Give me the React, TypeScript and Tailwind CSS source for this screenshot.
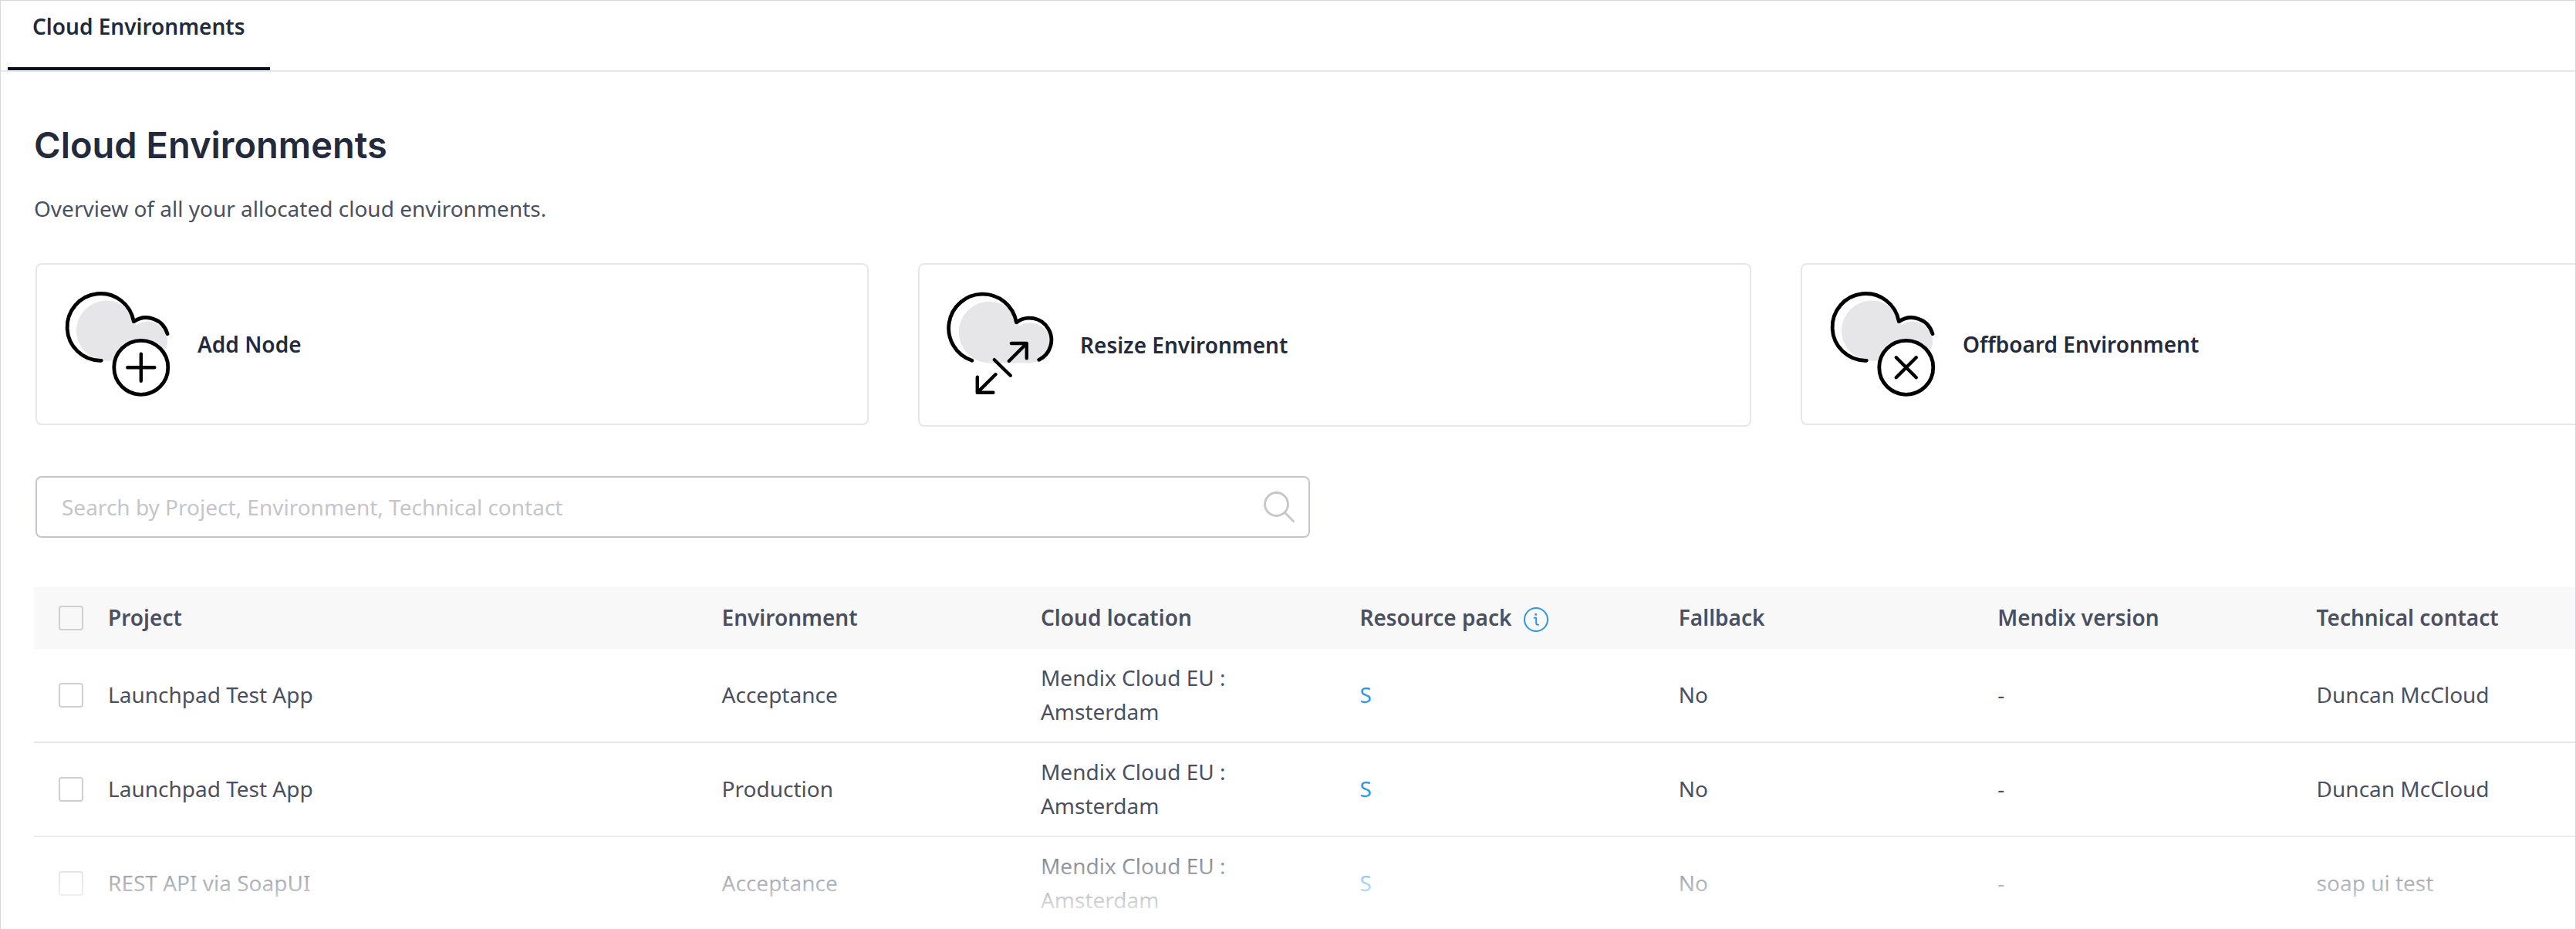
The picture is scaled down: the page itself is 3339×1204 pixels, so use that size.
import React from "react";

const columns = [
  "Environment",
  "Cloud location",
  "Resource pack",
  "Fallback",
  "Mendix version",
  "Technical contact",
];

const rows = [
  { project: "Launchpad Test App", environment: "Acceptance", contact: "Duncan McCloud" },
  { project: "Launchpad Test App", environment: "Production", contact: "Duncan McCloud" },
  { project: "REST API via SoapUI", environment: "Acceptance", contact: "soap ui test" },
];

function CloudBadgeIcon({ kind }: { kind: "add" | "remove" }) {
  return (
    <svg
      className="h-[140px] w-[140px] shrink-0"
      viewBox="0 0 140 140"
      fill="none"
      stroke="#000"
      strokeWidth="4.8"
      strokeLinecap="round"
      strokeLinejoin="round"
      aria-hidden="true"
    >
      <g fill="#e6e6e8" stroke="none">
        <circle cx="56" cy="52.5" r="39" />
        <circle cx="109.7" cy="66" r="25.5" />
        <path d="M56 60h53.7v31.5H56Z" />
      </g>
      <path d="M49.3 91.3h-1.5A43.4 43.4 0 1 1 91.3 40.7A28.5 28.5 0 0 1 135 56.7" />
      <circle cx="100.8" cy="100.3" r="35" fill="#fff" />
      {kind === "add" ? (
        <path d="M100.8 82.8v35M83.3 100.3h35" strokeWidth="4.4" />
      ) : (
        <path d="M87.8 87.3l26 26M113.8 87.3l-26 26" strokeWidth="4.4" />
      )}
    </svg>
  );
}

function CloudResizeIcon() {
  return (
    <svg
      className="h-[140px] w-[140px] shrink-0"
      viewBox="0 0 140 140"
      fill="none"
      stroke="#000"
      strokeWidth="4.8"
      strokeLinecap="round"
      strokeLinejoin="round"
      aria-hidden="true"
    >
      <g fill="#e6e6e8" stroke="none">
        <circle cx="56.5" cy="53.5" r="39.8" />
        <circle cx="109.5" cy="67.3" r="26" />
        <path d="M56.5 60h53v33.3h-53Z" />
      </g>
      <path d="M33.9 90.3A44.2 44.2 0 1 1 91.4 40.7A28.5 28.5 0 1 1 120.7 89.3" />
      <g strokeWidth="4.4">
        <path d="M81.8 91l23-23M84.9 68h19.9v19.3" />
        <path d="M62.8 89.2l21 20.6" />
        <path d="M64.5 108.3l-23.7 23.4M40.8 111.7v20h20.6" />
      </g>
    </svg>
  );
}

function SearchIcon() {
  return (
    <svg
      className="h-10 w-10 shrink-0"
      viewBox="0 0 40 40"
      fill="none"
      stroke="#c5c5cb"
      strokeWidth="2.8"
      strokeLinecap="round"
      aria-hidden="true"
    >
      <circle cx="16.5" cy="16.5" r="15" />
      <path d="M27.3 27.3L38.5 38.5" />
    </svg>
  );
}

function InfoIcon() {
  return (
    <svg
      className="mt-1.5 h-8 w-8 shrink-0"
      viewBox="0 0 32 32"
      fill="none"
      stroke="#2f97e8"
      strokeWidth="2"
      strokeLinecap="round"
      strokeLinejoin="round"
      aria-hidden="true"
    >
      <circle cx="16" cy="16" r="15" />
      <path d="M13.7 13.8h2.5v7.2q0 1.8 2.8 1.8" />
      <circle cx="15.7" cy="9.3" r="1.5" fill="#2f97e8" stroke="none" />
    </svg>
  );
}

function Checkbox({ label }: { label: string }) {
  return (
    <input
      type="checkbox"
      aria-label={label}
      className="ml-8 block h-8 w-8 appearance-none rounded border-2 border-[#ceced3] bg-transparent checked:bg-[#2f97e8]"
    />
  );
}

function ActionCard({ label, icon, tall }: { label: string; icon: React.ReactNode; tall?: boolean }) {
  return (
    <button
      type="button"
      className={`flex items-center gap-[34px] rounded-lg border-2 border-[#e7e7e9] pl-[34px] text-left font-semibold text-[#232a3b] ${tall ? "h-[212px]" : "h-[210px]"}`}
    >
      {icon}
      {label}
    </button>
  );
}

const cell = "border-b-2 border-[#e7e7e9] px-0 pt-0 pb-0.5";

export default function App() {
  return (
    <div className="relative max-h-screen overflow-hidden border border-b-0 border-[#d7d7d9] bg-white font-['Noto_Sans',sans-serif] text-[28px] leading-[44px] text-[#4a5060]">
      <nav className="flex border-b-2 border-[#e7e7e9] pl-[9px]">
        <button
          type="button"
          className="border-b-4 border-[#0b1022] px-8 pt-[11px] pb-[31px] font-semibold text-[#232a3b]"
        >
          Cloud Environments
        </button>
      </nav>
      <main className="-mr-[78px] pl-[43px]">
        <h1 className="pt-[65px] font-['Inter',sans-serif] text-[47px] leading-[60px] font-semibold text-[#232a3b]">
          Cloud Environments
        </h1>
        <p className="pt-[30px]">Overview of all your allocated cloud environments.</p>
        <section className="mt-[49px] grid grid-cols-3 items-start gap-16 px-[2px]">
          <ActionCard label="Add Node" icon={<CloudBadgeIcon kind="add" />} />
          <ActionCard label="Resize Environment" icon={<CloudResizeIcon />} tall />
          <ActionCard label="Offboard Environment" icon={<CloudBadgeIcon kind="remove" />} />
        </section>
        <label className="mt-16 ml-[2px] flex h-20 w-[49%] items-center rounded-lg border-2 border-[#c5c5cb] pr-[18px] pl-8">
          <input
            type="text"
            aria-label="Search"
            placeholder="Search by Project, Environment, Technical contact"
            className="min-w-0 flex-1 bg-transparent outline-none placeholder:text-[#c5c5cb]"
          />
          <SearchIcon />
        </label>
        <table className="mt-16 w-full table-fixed border-separate border-spacing-0 text-left">
          <colgroup>
            <col className="w-24" />
            <col />
            {columns.map((c) => (
              <col key={c} className="w-[12.26%]" />
            ))}
          </colgroup>
          <thead>
            <tr className="h-20 bg-[#f8f8f8]">
              <th className="p-0">
                <Checkbox label="Select all" />
              </th>
              <th className="px-0 pt-0 pb-0.5 font-semibold">Project</th>
              {columns.map((c) => (
                <th key={c} className="px-0 pt-0 pb-0.5 font-semibold">
                  <span className="flex items-center gap-4">
                    {c}
                    {c === "Resource pack" && <InfoIcon />}
                  </span>
                </th>
              ))}
            </tr>
          </thead>
          <tbody>
            {rows.map((r, i) => (
              <tr key={i} className="h-[122px]">
                <td className="border-b-2 border-[#e7e7e9] p-0">
                  <Checkbox label={`Select ${r.project} ${r.environment}`} />
                </td>
                <td className={cell}>{r.project}</td>
                <td className={cell}>{r.environment}</td>
                <td className="border-b-2 border-[#e7e7e9] pt-[15px] pr-24 pb-[17px] pl-0">
                  Mendix Cloud EU : Amsterdam
                </td>
                <td className={cell}>
                  <a href="#resource-pack" className="text-[#2f97e8]">
                    S
                  </a>
                </td>
                <td className={cell}>No</td>
                <td className={cell}>-</td>
                <td className={cell}>{r.contact}</td>
              </tr>
            ))}
          </tbody>
        </table>
      </main>
      <div className="pointer-events-none absolute -inset-x-px bottom-0 h-[136px] bg-linear-to-b from-white/0 to-white" />
    </div>
  );
}
